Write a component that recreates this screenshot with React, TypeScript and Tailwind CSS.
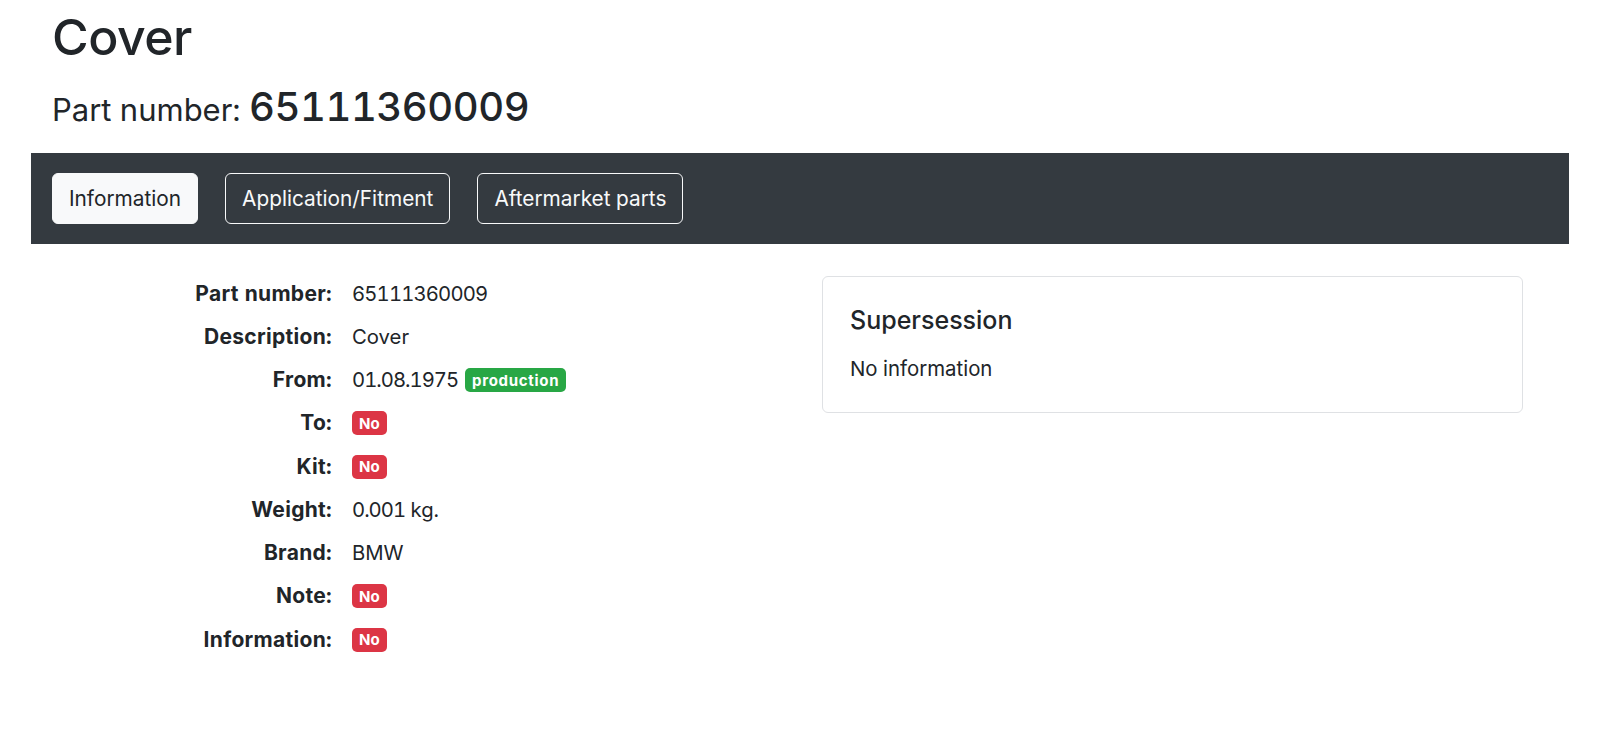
import React from "react";

function Num({ children }: { children: React.ReactNode }) {
  return <span className="tracking-[-1px]">{children}</span>;
}

function NoBadge() {
  return (
    <span className="inline-flex h-[24px] items-center rounded-[5px] bg-[#dc3545] px-[7px] text-[15px] font-bold leading-none text-white">
      No
    </span>
  );
}

const rows: { label: string; value: React.ReactNode }[] = [
  { label: "Part number:", value: <span className="tracking-[-0.85px]">65111360009</span> },
  { label: "Description:", value: "Cover" },
  {
    label: "From:",
    value: (
      <span className="flex items-center">
        <Num>01.08.1975</Num>
        <span className="ml-[7px] inline-flex h-[24px] items-center rounded-[5px] bg-[#28a745] px-[7px] text-[15px] font-bold leading-none tracking-[0.7px] text-white">
          production
        </span>
      </span>
    ),
  },
  { label: "To:", value: <NoBadge /> },
  { label: "Kit:", value: <NoBadge /> },
  {
    label: "Weight:",
    value: (
      <span>
        <Num>0.001</Num> kg.
      </span>
    ),
  },
  { label: "Brand:", value: "BMW" },
  { label: "Note:", value: <NoBadge /> },
  { label: "Information:", value: <NoBadge /> },
];

export default function App() {
  return (
    <div
      className="min-h-screen bg-white text-[#212529] tabular-nums"
      style={{ fontFamily: "Inter, 'Noto Sans', sans-serif" }}
    >
      <div className="px-[52px] pt-[7px]">
        <h1 className="text-[50px] font-medium leading-[60px] tracking-[-0.5px]">Cover</h1>
        <h2 className="mt-[16px] text-[31px] font-normal leading-[48px]">
          Part number:{" "}
          <span className="text-[40px] font-medium tracking-[-0.45px]">65111360009</span>
        </h2>
      </div>

      <div className="mx-[31px] mt-[19px] flex gap-[27px] bg-[#343a40] px-[21px] py-[20px]">
        <button className="h-[51px] rounded-[6px] border border-[#f8f9fa] bg-[#f8f9fa] px-[16px] text-[20.8px] leading-[30px] text-[#212529]">
          Information
        </button>
        <button className="h-[51px] rounded-[6px] border border-[#f8f9fa] px-[16px] text-[20.8px] leading-[30px] text-[#f8f9fa]">
          Application/Fitment
        </button>
        <button className="h-[51px] rounded-[6px] border border-[#f8f9fa] px-[16px] text-[20.8px] leading-[30px] text-[#f8f9fa]">
          Aftermarket parts
        </button>
      </div>

      <div className="mt-[28px] flex pl-[52px]">
        <div className="w-[770px]">
          {rows.map((r) => (
            <div key={r.label} className="flex h-[43.25px] items-center text-[20.3px] leading-[30px]">
              <div className="w-[280px] text-right text-[21px] font-bold tracking-[0.3px]">{r.label}</div>
              <div className="ml-[20px] flex items-center">{r.value}</div>
            </div>
          ))}
        </div>
        <div className="mt-[4px] h-[137px] w-[701px] rounded-[6px] border border-[#dfe1e4] px-[27px] pt-[28px]">
          <div className="text-[25px] font-medium leading-[30px]">Supersession</div>
          <div className="mt-[19px] text-[20.4px] leading-[30px]">No information</div>
        </div>
      </div>
    </div>
  );
}
